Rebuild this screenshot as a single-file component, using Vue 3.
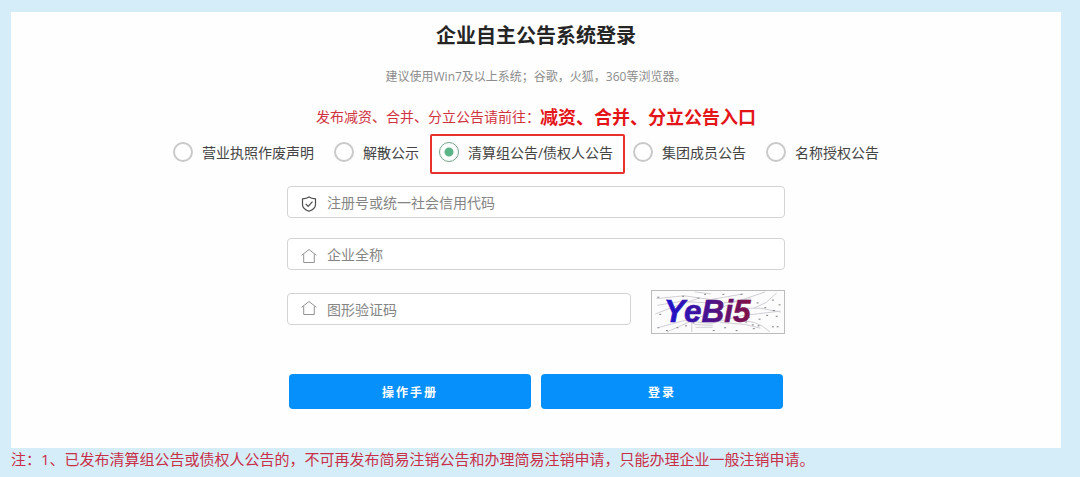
<script setup>
import { ref } from 'vue'

const kinds = ['营业执照作废声明', '解散公示', '清算组公告/债权人公告', '集团成员公告', '名称授权公告']
const kind = ref(kinds[2])
const code = ref('')
const company = ref('')
const captcha = ref('')

const specks = [
  [4, 6], [13, 9], [46, 7], [72, 3], [91, 3], [124, 9], [131, 14], [116, 17], [125, 20],
  [6, 24], [4, 38], [13, 41], [24, 38], [33, 36], [41, 33], [74, 38], [96, 32], [103, 35],
  [104, 39], [109, 36], [124, 37], [129, 37], [118, 25], [128, 26], [110, 29], [62, 41],
  [20, 30], [86, 41], [53, 3], [30, 5], [108, 12], [99, 27]
]
</script>

<template>
  <div class="page">
    <main class="panel">
      <h1 class="title">企业自主公告系统登录</h1>
      <p class="tip">建议使用Win7及以上系统；谷歌，火狐，360等浏览器。</p>
      <p class="entry">
        <span>发布减资、合并、分立公告请前往：</span>
        <a href="#">减资、合并、分立公告入口</a>
      </p>

      <form @submit.prevent>
        <div class="kinds" role="radiogroup" aria-label="公告类型">
          <label v-for="k in kinds" :key="k" class="kind" :class="{ active: kind === k }">
            <input v-model="kind" type="radio" name="kind" :value="k" />
            <span>{{ k }}</span>
          </label>
        </div>

        <div class="fields">
          <label class="field">
            <svg class="icon dark" viewBox="0 0 16 16" aria-hidden="true">
              <path d="M8 1 C6.300 2.200 3.800 2.700 1.500 2.800 V8.500 C1.500 12 4.500 14 8 15.300 C11.500 14 14.500 12 14.500 8.500 V2.800 C12.200 2.700 9.700 2.200 8 1 Z" />
              <path d="M4.700 7.800 L7.200 10.400 L11.500 5.700" />
            </svg>
            <input v-model="code" type="text" placeholder="注册号或统一社会信用代码" aria-label="注册号或统一社会信用代码" />
          </label>
          <label class="field">
            <svg class="icon" viewBox="0 0 16 16" aria-hidden="true">
              <path d="M.6 7.300 L8 1.500 L15.400 7.300 M2.700 6.200 V14.500 H13.300 V6.200" />
            </svg>
            <input v-model="company" type="text" placeholder="企业全称" aria-label="企业全称" />
          </label>
          <div class="verify">
            <label class="field">
              <svg class="icon raised" viewBox="0 0 16 16" aria-hidden="true">
                <path d="M.6 7.300 L8 1.500 L15.400 7.300 M2.700 6.200 V14.500 H13.300 V6.200" />
              </svg>
              <input v-model="captcha" type="text" placeholder="图形验证码" aria-label="图形验证码" />
            </label>
            <button type="button" class="captcha" aria-label="刷新验证码">
              <svg viewBox="0 0 135 44" aria-hidden="true">
                <defs>
                  <linearGradient id="ink" gradientUnits="userSpaceOnUse" x1="12" y1="0" x2="104" y2="0">
                    <stop offset="0" stop-color="#1c12cf" />
                    <stop offset=".5" stop-color="#4a128f" />
                    <stop offset="1" stop-color="#86103f" />
                  </linearGradient>
                </defs>
                <g class="scratch">
                  <path d="M3 8 L32 5 L60 9 L94 3" />
                  <path d="M2 24 L20 17 L46 8" />
                  <path d="M6 38 L32 31 L60 34 L92 26 L133 21" />
                  <path d="M14 43 L45 29 L84 12 L117 1" />
                  <path d="M105 18 L118 12 L129 2" />
                  <path d="M88 18 L112 18 L133 22" />
                  <path d="M84 31 Q108 29 122 43" />
                  <path d="M43 35 L62 36 M44 38 L62 38 M43 1 L60 3" />
                  <path d="M4 15 L28 11 L70 13 L102 8" />
                  <path d="M40 43 L40 30 M70 33 L96 35 L112 39" />
                </g>
                <rect v-for="(s, i) in specks" :key="i" class="speck" :x="s[0]" :y="s[1]" width="2" height="1" />
                <text x="11" y="32" fill="url(#ink)" stroke="url(#ink)">YeBi5</text>
              </svg>
            </button>
          </div>
        </div>

        <div class="actions">
          <button type="button">操作手册</button>
          <button type="submit">登录</button>
        </div>
      </form>
    </main>
    <p class="note">注：1、已发布清算组公告或债权人公告的，不可再发布简易注销公告和办理简易注销申请，只能办理企业一般注销申请。</p>
  </div>
</template>

<style>
body {
  background: #d5edf9;
}
</style>

<style scoped>
.page {
  box-sizing: border-box;
  padding: 12px 19px 0 11px;
  font-family: "Open Sans", "Noto Sans CJK SC", sans-serif;
  color: #444;
}
.panel {
  background: #fefefe;
  padding: 9px 0 39px;
}
.title {
  margin: 0;
  font-size: 20px;
  line-height: 30px;
  font-weight: 700;
  text-align: center;
  color: #252525;
}
.tip {
  margin: 16px 0 0;
  font-size: 12px;
  line-height: 20px;
  text-align: center;
  color: #8c8c8c;
}
.entry {
  display: flex;
  justify-content: center;
  align-items: center;
  margin: 15px 0 0;
  font-size: 14px;
  line-height: 30px;
  color: #d0323f;
}
.entry a {
  font-size: 18px;
  line-height: 28px;
  font-weight: 700;
  color: #e41519;
  text-decoration: none;
}
.kinds {
  display: flex;
  justify-content: center;
  margin-top: 2px;
}
.kind {
  position: relative;
  display: flex;
  align-items: center;
  gap: 9px;
  height: 36px;
  margin-right: 20px;
  font-size: 14px;
  white-space: nowrap;
}
.kind.active::after {
  content: "";
  position: absolute;
  inset: 0 -12px -4px -9px;
  border: 2px solid #e8302c;
  border-radius: 2px;
  pointer-events: none;
}
.kind input {
  appearance: none;
  box-sizing: border-box;
  width: 20px;
  height: 20px;
  margin: 0;
  border: 2px solid #c9c9c9;
  border-radius: 50%;
  background: #fff;
}
.kind input:checked {
  border: 1px solid #78a48b;
  background: radial-gradient(circle, #5cb587 4px, #fff 5px);
}
.fields {
  display: flex;
  flex-direction: column;
  gap: 20px;
  max-width: 498px;
  margin: 16px auto 0;
}
.field {
  box-sizing: border-box;
  display: flex;
  flex: 1;
  align-items: center;
  gap: 10px;
  height: 32px;
  min-height: 32px;
  padding: 0 13px;
  border: 1px solid #d4d4d4;
  border-radius: 4px;
  background: #fff;
}
.field input {
  flex: 1;
  min-width: 0;
  padding: 0;
  border: 0;
  outline: 0;
  background: none;
  font: inherit;
  font-size: 14px;
  color: #444;
}
.field input::placeholder {
  color: #858585;
  opacity: 1;
}
.icon {
  width: 16px;
  height: 16px;
  margin-top: 3px;
  fill: none;
  stroke: #929292;
  stroke-width: 1;
}
.icon.dark {
  stroke: #4c4c4c;
  stroke-width: 1.200;
}
.icon.raised {
  margin: 0 0 3px;
}
.verify {
  display: flex;
  align-items: flex-start;
  gap: 20px;
}
.verify .field {
  margin-top: 3px;
}
.captcha {
  width: 134px;
  height: 44px;
  padding: 0;
  border: 1px solid #bcbcbc;
  box-sizing: border-box;
  background: #fcfcfc;
  overflow: hidden;
}
.captcha svg {
  display: block;
  width: 100%;
  height: 100%;
}
.captcha text {
  font: italic 700 33px "Liberation Sans", sans-serif;
  stroke-width: .6;
}
.scratch {
  fill: none;
  stroke: #d0ccd3;
  stroke-width: 1;
}
.speck {
  fill: #777;
}
.actions {
  display: flex;
  gap: 10px;
  max-width: 494px;
  margin: 40px auto 0;
}
.actions button {
  flex: 1;
  height: 35px;
  padding: 0;
  border: 0;
  border-radius: 4px;
  background: #0590fc;
  color: #fff;
  font: inherit;
  font-size: 12px;
  font-weight: 700;
  letter-spacing: 2px;
}
.note {
  margin: 0;
  font-size: 15px;
  line-height: 22px;
  color: #c92f48;
}
</style>
